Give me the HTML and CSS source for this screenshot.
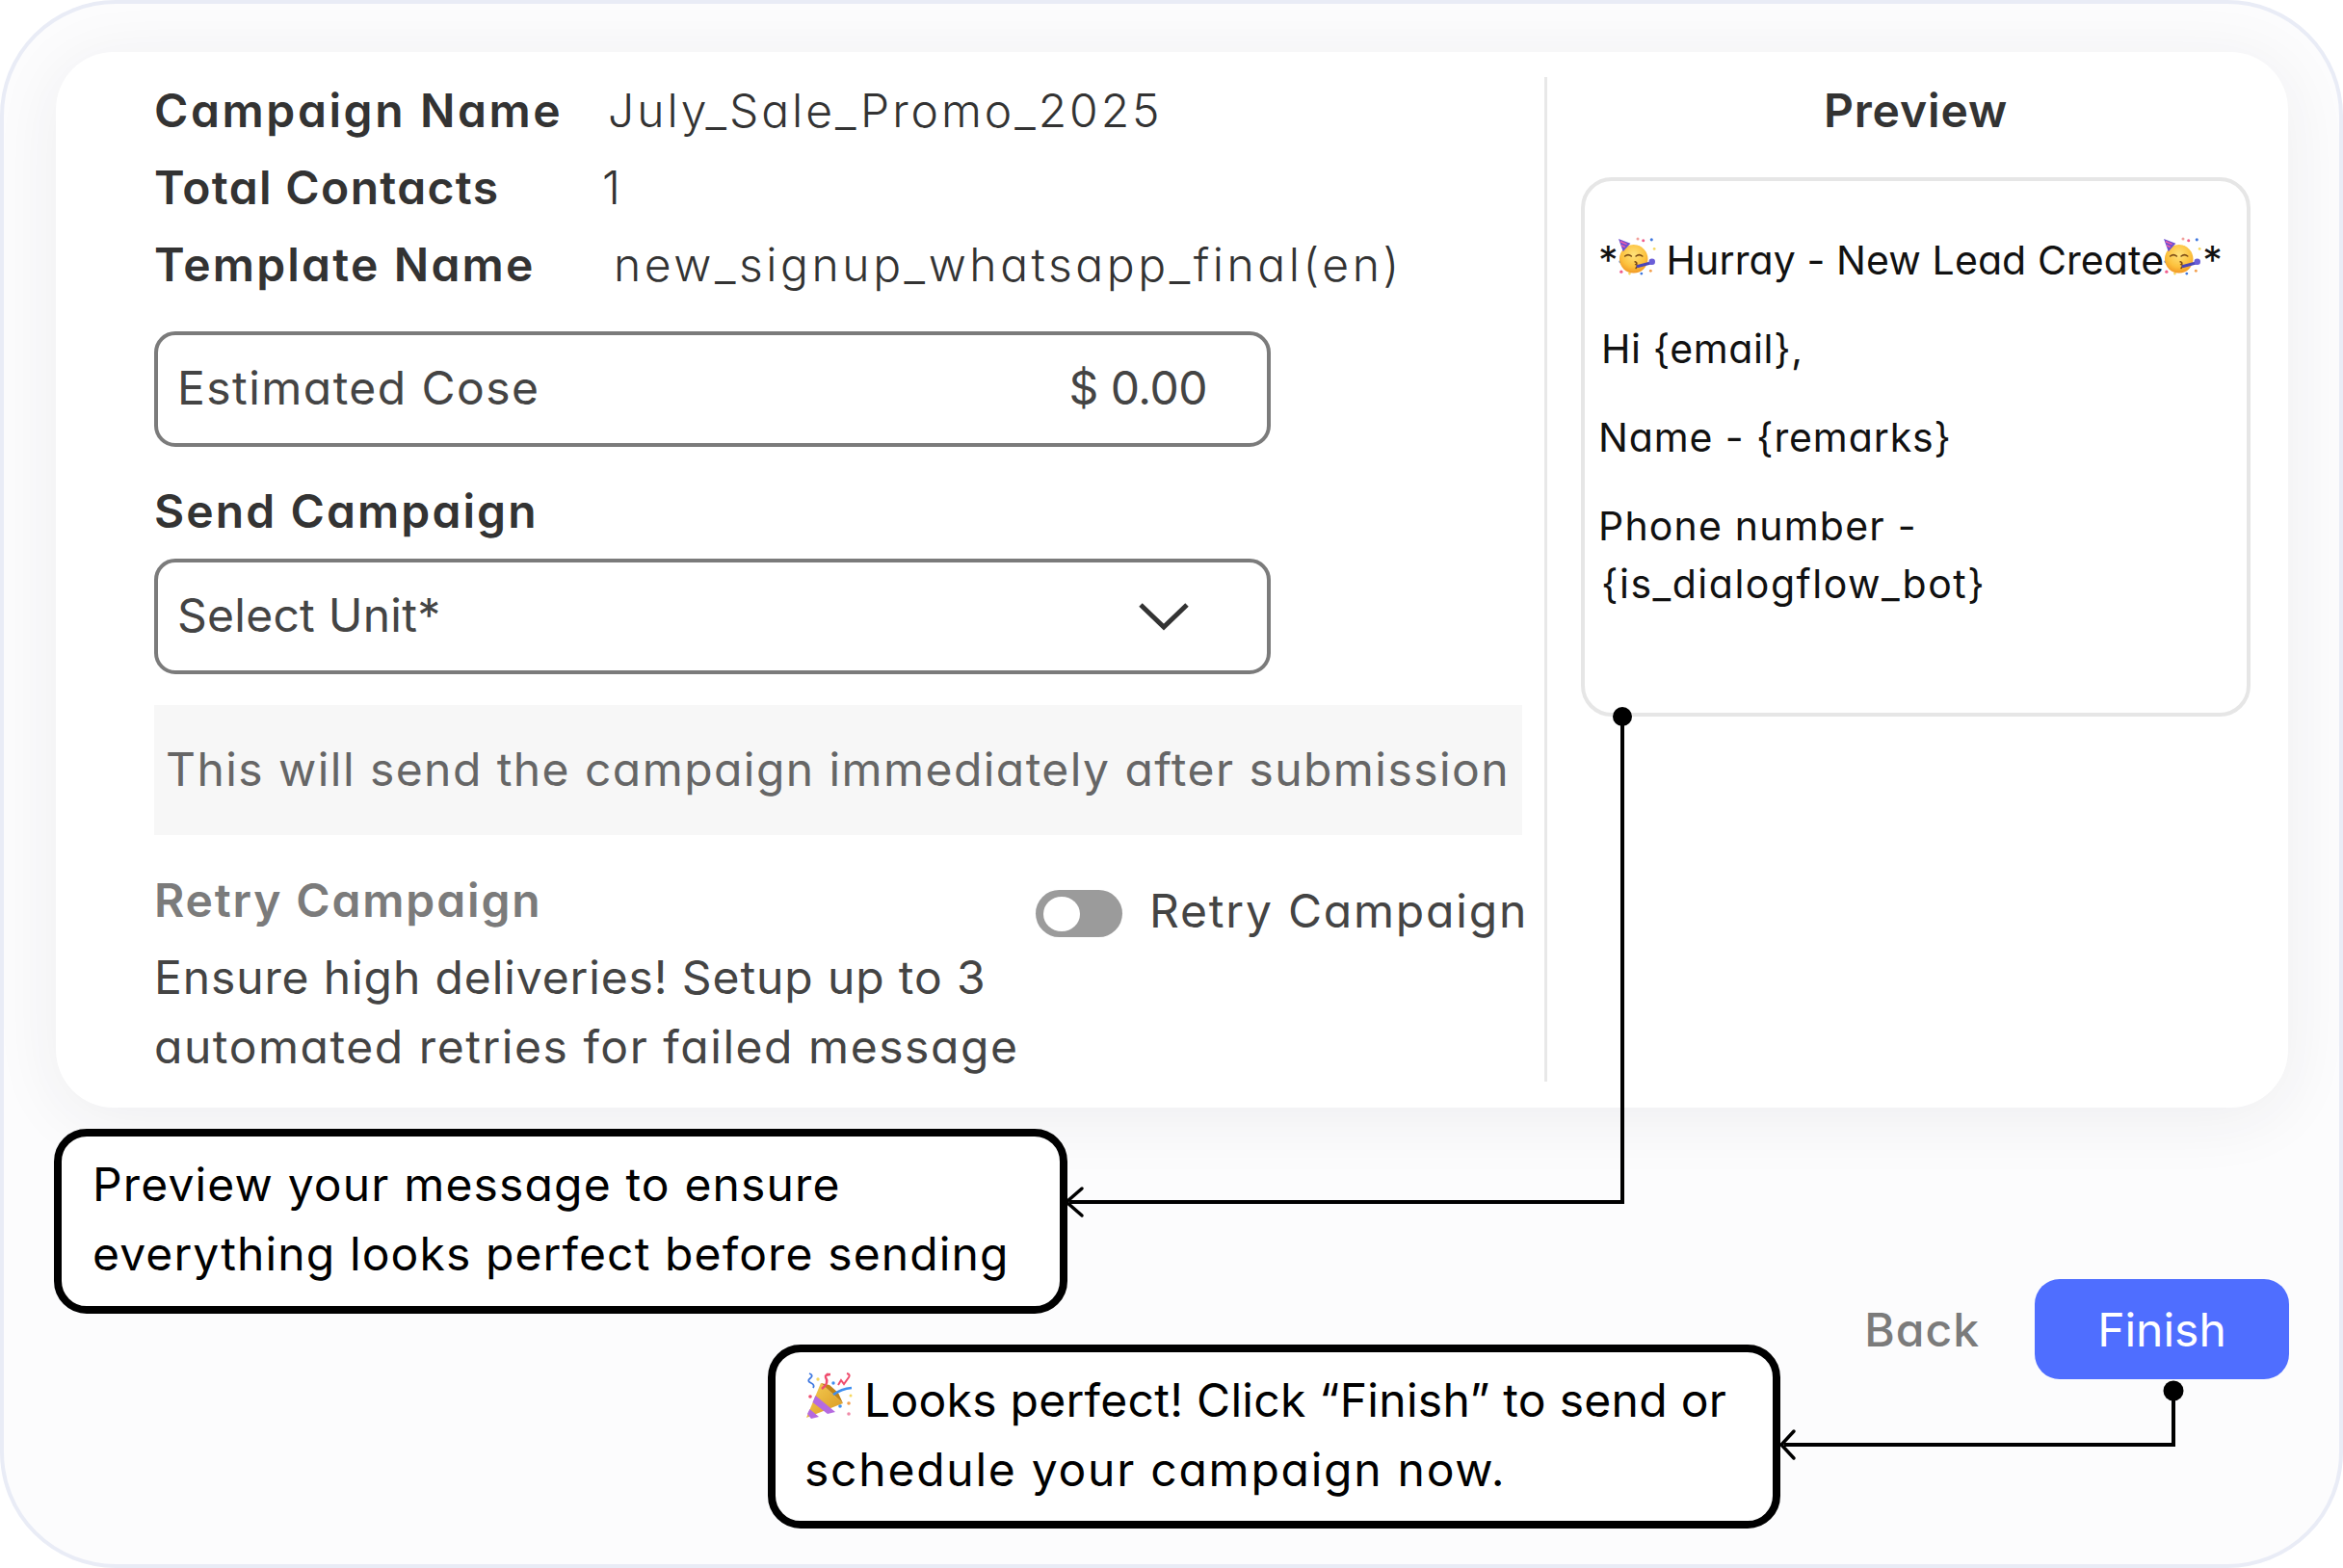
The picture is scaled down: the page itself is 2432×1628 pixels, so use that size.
FILE: index.html
```html
<!DOCTYPE html>
<html lang="en">
<head>
<meta charset="utf-8">
<title>Campaign review</title>
<link rel="stylesheet" href="styles.css">
</head>
<body>
<svg class="defs" width="0" height="0" aria-hidden="true">
  <defs>
    <radialGradient id="face-fill" cx="50%" cy="35%" r="70%">
      <stop offset="0" stop-color="#ffe27a"/>
      <stop offset=".6" stop-color="#fcc23e"/>
      <stop offset="1" stop-color="#f08f1e"/>
    </radialGradient>
    <linearGradient id="cone-fill" x1="0" y1="0" x2="1" y2="1">
      <stop offset="0" stop-color="#f6cf55"/>
      <stop offset="1" stop-color="#d8961f"/>
    </linearGradient>
  </defs>
  <symbol id="party-face" viewBox="0 0 42 42">
    <circle cx="21" cy="2" r="1.6" fill="#f2a09a"/>
    <circle cx="27" cy="4" r="1.6" fill="#ef5d8c"/>
    <circle cx="36" cy="3" r="1.6" fill="#3f78e0"/>
    <circle cx="39" cy="13" r="1.5" fill="#f6d860"/>
    <circle cx="2" cy="27" r="1.5" fill="#3f78e0"/>
    <circle cx="3" cy="38" r="1.7" fill="#ef5d8c"/>
    <circle cx="12" cy="40" r="1.4" fill="#f6d860"/>
    <circle cx="25" cy="40" r="1.5" fill="#3f78e0"/>
    <circle cx="35" cy="37" r="1.5" fill="#f2a050"/>
    <circle cx="16.500" cy="24" r="15.500" fill="url(#face-fill)"/>
    <path d="M0 2 L13 7 L5 16 Z" fill="#6d4fd0"/>
    <path d="M2 5 L9 8 M3 9 L7 11" stroke="#ef5da8" stroke-width="1.6"/>
    <path d="M7 21 q3.500 -3 7 0 M19 21 q3.500 -3 7 0" fill="none" stroke="#7a4a14" stroke-width="1.700" stroke-linecap="round"/>
    <path d="M18 27 q3 1 1 3 q3 1 0 4" fill="none" stroke="#7a4a14" stroke-width="1.700" stroke-linecap="round"/>
    <path d="M21 32 L36 28" stroke="#4a45b8" stroke-width="3.200" stroke-linecap="round"/>
    <circle cx="36.500" cy="27" r="3.400" fill="#6a5ed8"/>
  </symbol>
  <symbol id="party-popper" viewBox="0 0 50 50">
    <path d="M2 48 L17 12 L40 33 Z" fill="url(#cone-fill)"/>
    <path d="M11.500 25 L32 42 L24 44 L8.500 32 Z" fill="#b56ae0"/>
    <path d="M5.500 39 L15 47 L7 49 L3 44 Z" fill="#b56ae0"/>
    <path d="M17 12 L40 33 L35 22 L26 14 Z" fill="#c18318"/>
    <path d="M18 18 q8 -6 4 -12 q-1 -3 5 -3" fill="none" stroke="#ef4d6e" stroke-width="2.400"/>
    <path d="M30 24 q8 -6 19 -7" fill="none" stroke="#3f8ff0" stroke-width="2.600"/>
    <path d="M35 14 l3 -5 l3 4 l5 -7 q2 -3 -2 -4" fill="none" stroke="#ef4d6e" stroke-width="2"/>
    <path d="M5 2 q5 2 1 5 q-4 3 1 5 q4 2 2 5" fill="none" stroke="#3f78e0" stroke-width="1.800"/>
    <circle cx="14" cy="8" r="1.700" fill="#f6d860"/>
    <circle cx="24" cy="3" r="1.500" fill="#ef4d6e"/>
    <circle cx="30" cy="12" r="1.700" fill="#3f8ff0"/>
    <circle cx="6" cy="26" r="1.800" fill="#ef4d6e"/>
    <circle cx="37" cy="36" r="1.800" fill="#3f8ff0"/>
    <circle cx="46" cy="33" r="1.800" fill="#f2a050"/>
    <circle cx="48" cy="25" r="1.500" fill="#f6d860"/>
    <circle cx="46" cy="44" r="1.800" fill="#f08aa8"/>
  </symbol>
</svg>

<div class="stage">
  <div class="frame">
    <section class="card">
      <div class="form-col">
        <div class="meta-row"><span class="meta-label label-campaign">Campaign Name</span><span class="meta-value value-campaign">July_Sale_Promo_2025</span></div>
        <div class="meta-row"><span class="meta-label label-contacts">Total Contacts</span><span class="meta-value">1</span></div>
        <div class="meta-row"><span class="meta-label label-template">Template Name</span><span class="meta-value value-template">new_signup_whatsapp_final(en)</span></div>

        <div class="field field-cost">
          <span class="field-text text-cost">Estimated Cose</span>
          <span class="field-text text-amount">$ 0.00</span>
        </div>

        <h2 class="section-title">Send Campaign</h2>
        <div class="field field-select">
          <span class="field-text text-unit">Select Unit*</span>
          <svg class="chevron" width="54" height="32" viewBox="0 0 54 32"><path d="M3 4 L27 27 L51 4" fill="none" stroke="#333" stroke-width="5"/></svg>
        </div>

        <p class="note">This will send the campaign immediately after submission</p>

        <div class="retry">
          <div class="retry-copy">
            <h3 class="retry-title">Retry Campaign</h3>
            <p class="retry-text"><span class="retry-first">Ensure high deliveries! Setup up to 3</span><br><span class="retry-second">automated retries for failed message</span></p>
          </div>
          <div class="retry-toggle">
            <span class="toggle"><span class="toggle-knob"></span></span>
            <span class="toggle-label">Retry Campaign</span>
          </div>
        </div>
      </div>

      <aside class="preview-col">
        <h2 class="preview-title">Preview</h2>
        <div class="preview-box">
          <p class="preview-line line-head">*<svg class="emoji-face"><use href="#party-face"/></svg><span class="head-text">Hurray - New Lead Create</span><svg class="emoji-face"><use href="#party-face"/></svg>*</p>
          <p class="preview-line line-hi">Hi {email},</p>
          <p class="preview-line line-name">Name - {remarks}</p>
          <p class="preview-line"><span class="line-phone">Phone number -</span><br><span class="line-bot">{is_dialogflow_bot}</span></p>
        </div>
      </aside>
    </section>

    <footer class="actions">
      <span class="back">Back</span>
      <span class="finish">Finish</span>
    </footer>
  </div>

  <svg class="connectors" width="2432" height="1628" viewBox="0 0 2432 1628" aria-hidden="true">
    <g fill="none" stroke="#000" stroke-width="4">
      <path d="M1684 744 V1248 H1110"/>
      <path d="M2256 1444 V1500 H1852"/>
      <g stroke-linecap="round" stroke-width="3.5">
        <path d="M1123 1234 L1107 1248 L1123 1262"/>
        <path d="M1862 1486 L1849 1500 L1862 1514"/>
      </g>
    </g>
    <circle cx="1684" cy="744" r="10"/>
    <circle cx="2256" cy="1444" r="10.500"/>
  </svg>

  <div class="callout callout-preview"><span class="preview-first">Preview your message to ensure</span><br><span class="preview-second">everything looks perfect before sending</span></div>
  <div class="callout callout-finish"><svg class="emoji-popper"><use href="#party-popper"/></svg><span class="finish-first">Looks perfect! Click “Finish” to send or</span><br><span class="finish-second">schedule your campaign now.</span></div>
</div>
</body>
</html>
```

FILE: styles.css
```css
* { box-sizing: border-box; }
html, body { margin: 0; padding: 0; background: #fff; }
body {
  font-family: Inter, "Liberation Sans", sans-serif;
  font-feature-settings: "cv11" 1;
  color: #333;
}
.defs { position: absolute; }
.stage { position: relative; width: 2432px; height: 1628px; overflow: hidden; }
.frame {
  width: 2432px;
  height: 1628px;
  background: #fcfcfd;
  border: 4px solid #e9ecf6;
  border-radius: 120px;
  padding: 50px 53px 0 54px;
  overflow: hidden;
}
.card {
  display: flex;
  height: 1096px;
  background: #fff;
  border-radius: 60px;
  padding: 21px 0 27px;
  box-shadow: 0 10px 70px rgba(40, 44, 60, .07);
}
.form-col { width: 1545px; padding-left: 102px; flex: none; }
.meta-row { display: flex; height: 80px; line-height: 80px; font-size: 48px; white-space: nowrap; }
.meta-label { font-weight: 600; color: #333; }
.label-campaign { width: 471px; letter-spacing: 2.600px; }
.label-contacts { width: 465px; letter-spacing: 1.350px; }
.label-template { width: 477px; letter-spacing: 2.200px; }
.meta-value { font-weight: 300; color: #333; }
.value-campaign { letter-spacing: 2.950px; }
.value-template { letter-spacing: 3.550px; }

.field {
  display: flex;
  align-items: center;
  justify-content: space-between;
  width: 1159px;
  height: 120px;
  border: 4px solid #7b7b7b;
  border-radius: 22px;
  padding: 0 20px;
}
.field-cost { margin-top: 29px; }
.field-text { font-size: 48px; font-weight: 400; color: #444; white-space: nowrap; margin-bottom: 3px; }
.text-cost { letter-spacing: 1.450px; }
.text-unit { letter-spacing: .25px; }
.text-amount { margin-right: 42px; letter-spacing: -.5px; }
.chevron { margin-right: 60px; }
.section-title {
  margin: 37px 0 19px;
  font-size: 48px;
  line-height: 60px;
  font-weight: 600;
  letter-spacing: 2.100px;
  color: #333;
}
.note {
  margin: 32px 0 0;
  width: 1420px;
  height: 135px;
  padding: 0 0 0 12px;
  background: #f7f7f7;
  color: #666;
  font-size: 48px;
  letter-spacing: 1.440px;
  line-height: 133px;
  white-space: nowrap;
}
.retry { display: flex; margin-top: 38px; }
.retry-copy { width: 915px; flex: none; }
.retry-title { margin: 0 0 14px; font-size: 48px; line-height: 60px; font-weight: 600; letter-spacing: 1.850px; color: #7b7b7b; white-space: nowrap; }
.retry-text { margin: 0; font-size: 48px; line-height: 72px; color: #444; white-space: nowrap; }
.retry-first { letter-spacing: .88px; }
.retry-second { letter-spacing: 1.550px; }
.retry-toggle { display: flex; align-items: center; gap: 28px; height: 49px; margin-top: 19px; white-space: nowrap; }
.toggle { display: flex; align-items: center; width: 90px; height: 49px; padding-left: 8px; background: #9b9b9b; border-radius: 25px; flex: none; }
.toggle-knob { display: block; width: 38px; height: 36px; background: #fff; border-radius: 50%; }
.toggle-label { font-size: 48px; letter-spacing: 1.800px; color: #444; margin-bottom: 6px; }

.preview-col {
  flex: 1;
  margin-top: 5px;
  padding: 9px 39px 0 35px;
  border-left: 3px solid #e8e8e8;
}
.preview-title { margin: 0 0 43px; text-align: center; font-size: 48px; line-height: 52px; font-weight: 600; letter-spacing: .85px; color: #333; }
.preview-box {
  width: 695px;
  height: 560px;
  border: 4px solid #e6e6e6;
  border-radius: 32px;
  padding: 52px 0 0 14px;
  color: #111;
}
.preview-line { margin: 0 0 32px; font-size: 41px; line-height: 60px; white-space: nowrap; }
.line-head { display: flex; align-items: center; height: 60px; }
.emoji-face { width: 40px; height: 40px; flex: none; margin-top: -8px; }
.head-text { margin-left: 10px; letter-spacing: .1px; }
.line-hi { margin-left: 3px; letter-spacing: .6px; }
.line-name { letter-spacing: .9px; }
.line-phone { letter-spacing: 1.200px; }
.line-bot { margin-left: 3px; letter-spacing: 1.500px; }

.actions { display: flex; justify-content: flex-end; align-items: center; gap: 57px; margin: 178px -1px 0 0; }
.back { font-size: 48px; font-weight: 500; letter-spacing: 1px; color: #7b7b7b; }
.finish {
  display: flex;
  align-items: center;
  justify-content: center;
  width: 264px;
  height: 104px;
  background: #4f6eff;
  border-radius: 26px;
  color: #fff;
  font-size: 48px;
}

.connectors { position: absolute; left: 0; top: 0; }
.callout {
  position: absolute;
  background: #fff;
  border: 8px solid #000;
  border-radius: 34px;
  color: #000;
  font-size: 48px;
  line-height: 72px;
  white-space: nowrap;
}
.callout-preview { left: 56px; top: 1172px; width: 1052px; height: 192px; padding: 14px 0 0 32px; }
.preview-first { letter-spacing: 1.150px; }
.preview-second { letter-spacing: 1.120px; }
.callout-finish { left: 797px; top: 1396px; width: 1051px; height: 191px; padding: 14px 0 0 30px; }
.emoji-popper { width: 50px; height: 50px; vertical-align: -3px; margin: 0 12px 0 0; }
.finish-first { letter-spacing: .28px; }
.finish-second { letter-spacing: 1.750px; }
```
